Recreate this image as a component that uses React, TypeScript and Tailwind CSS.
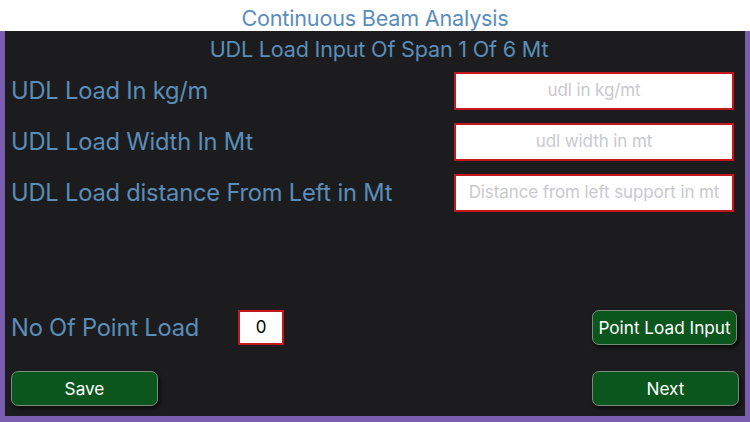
import React from "react";

const font = { fontFamily: "Inter, 'Noto Sans', sans-serif" };

function Field({ label, placeholder, top }: { label: string; placeholder: string; top: string }) {
  return (
    <div className={`flex items-center justify-between ${top}`}>
      <span className="text-[23.7px] leading-none text-[#5a8eba] tracking-[-0.2px]">{label}</span>
      <div className="mr-[11px] flex h-[38px] w-[280px] items-center justify-center border-2 border-[#c4161c] bg-white">
        <span className="text-[17px] text-[#c9c9ce] tracking-[-0.1px]">{placeholder}</span>
      </div>
    </div>
  );
}

function GreenButton({ children, w, className = "" }: { children: React.ReactNode; w: string; className?: string }) {
  return (
    <div
      className={`flex h-[35px] ${w} items-center justify-center rounded-[7px] border border-[#7a8a7c] bg-[#0b561d] text-[17.2px] text-white shadow-[2px_3px_4px_rgba(0,0,0,0.6)] ${className}`}
    >
      {children}
    </div>
  );
}

export default function App() {
  return (
    <div className="flex h-[422px] w-[750px] flex-col overflow-hidden bg-white" style={font}>
      <div className="flex h-[31px] items-end justify-center pb-[1px]">
        <span className="text-[21.6px] leading-none text-[#5a8eba] tracking-[-0.2px]">Continuous Beam Analysis</span>
      </div>
      <div className="flex flex-1 flex-col bg-[#7b5db0] px-[5px] pb-[6px]">
        <div className="flex flex-1 flex-col bg-[#1c1c1e] pl-[6px]">
          <div className="flex h-[37px] items-center justify-center pl-[2px] pt-[1px]">
            <span className="text-[21.6px] leading-none text-[#5a8eba] tracking-[-0.2px]">UDL Load Input Of Span 1 Of 6 Mt</span>
          </div>
          <Field label="UDL Load In kg/m" placeholder="udl in kg/mt" top="mt-[4px]" />
          <Field label="UDL Load Width In Mt" placeholder="udl width in mt" top="mt-[13px]" />
          <Field label="UDL Load distance From Left in Mt" placeholder="Distance from left support in mt" top="mt-[13px]" />
          <div className="flex-1" />
          <div className="flex items-center">
            <span className="w-[227px] text-[23.7px] leading-none text-[#5a8eba] tracking-[-0.2px]">No Of Point Load</span>
            <div className="flex h-[35px] w-[46px] items-center justify-center border-2 border-[#c4161c] bg-white text-[17px] text-black">
              0
            </div>
            <div className="flex-1" />
            <GreenButton w="w-[145px]" className="mr-[8px]">Point Load Input</GreenButton>
          </div>
          <div className="mb-[10px] mt-[26px] flex items-center justify-between">
            <GreenButton w="w-[147px]">Save</GreenButton>
            <GreenButton w="w-[147px]" className="mr-[6px]">Next</GreenButton>
          </div>
        </div>
      </div>
    </div>
  );
}
